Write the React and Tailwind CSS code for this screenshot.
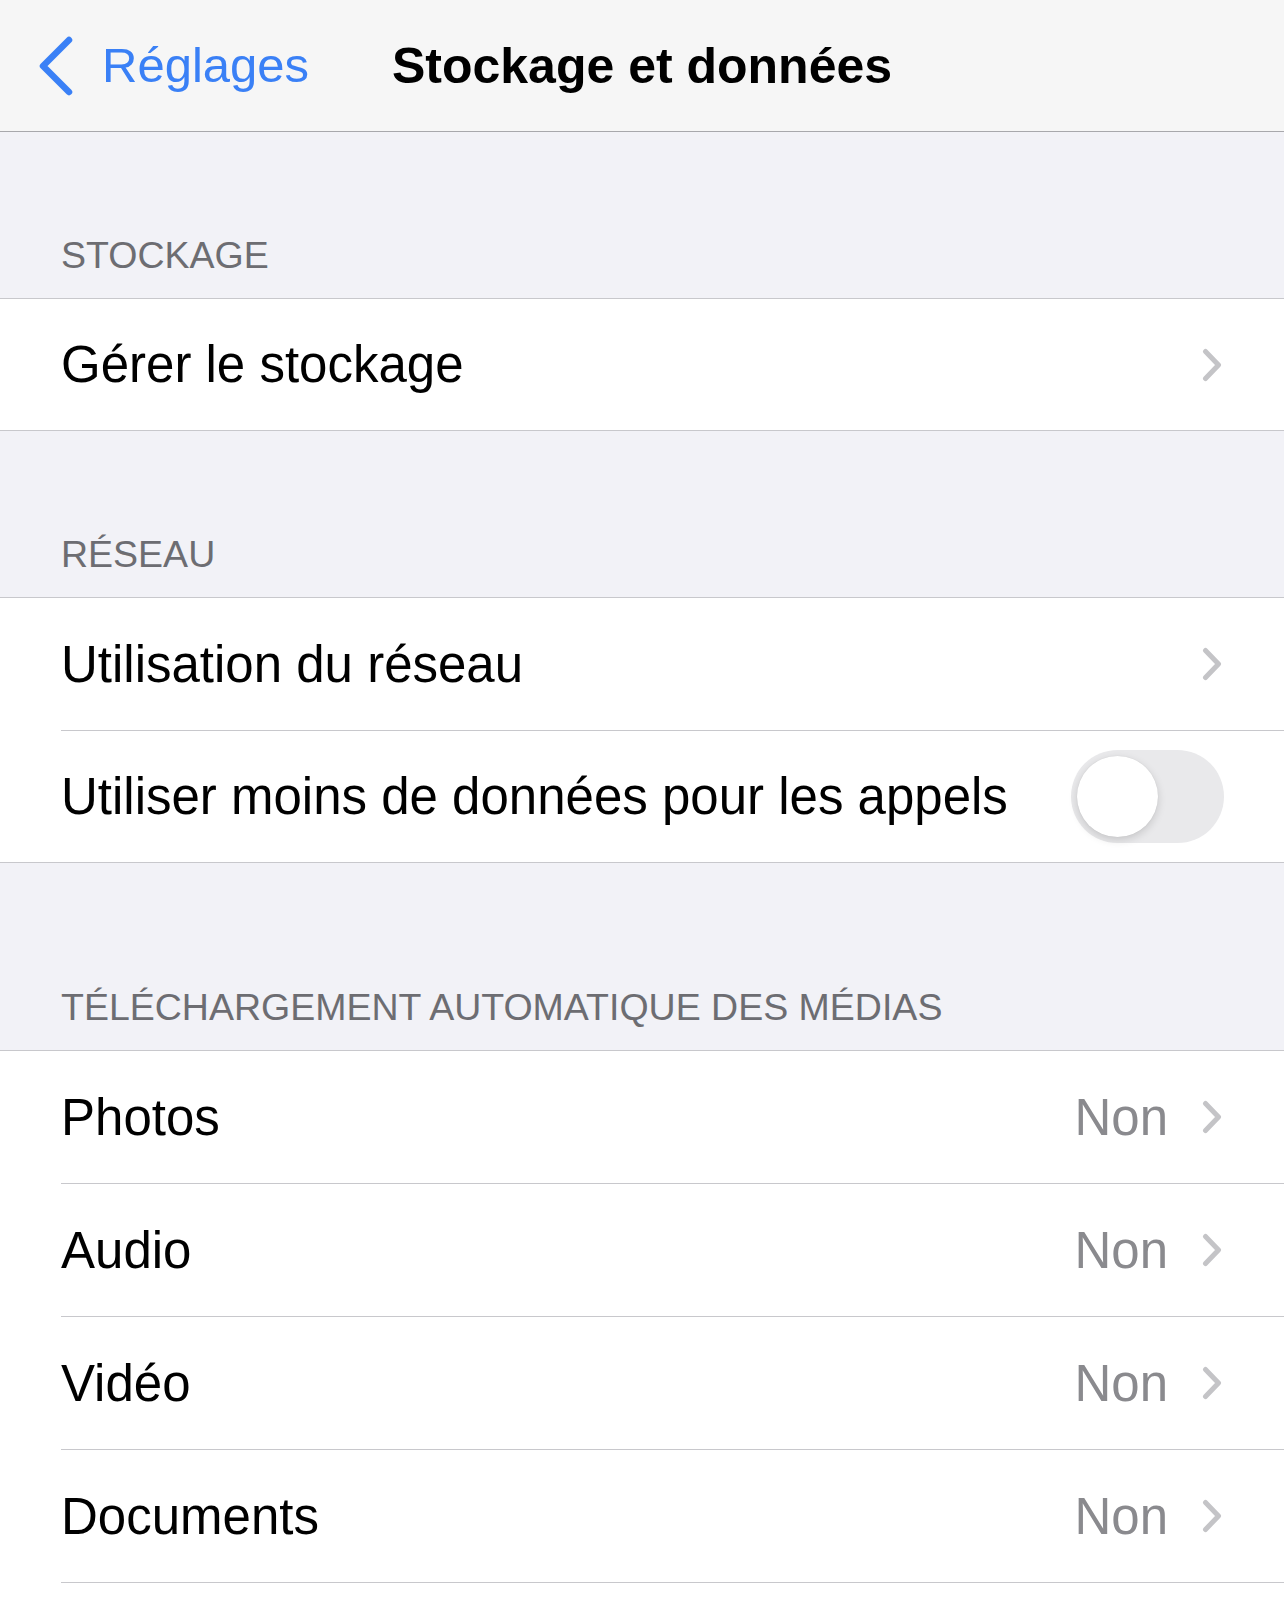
import React from "react";

const ChevronRight = () => (
  <svg width="20" height="34" viewBox="0 0 20 34" fill="none" className="shrink-0">
    <path d="M3.5 3.5 L16.5 17 L3.5 30.5" stroke="#c4c4c7" strokeWidth="5" strokeLinecap="round" strokeLinejoin="round" />
  </svg>
);

const ChevronBack = () => (
  <svg width="36" height="60" viewBox="0 0 36 60" fill="none" className="shrink-0">
    <path d="M32 4 L6 30 L32 56" stroke="#3a80f6" strokeWidth="6.5" strokeLinecap="round" strokeLinejoin="round" />
  </svg>
);

const Toggle = () => (
  <div className="w-[153px] h-[93px] rounded-full bg-[#e9e9eb] p-[6px] flex items-center shrink-0">
    <div className="w-[81px] h-[81px] rounded-full bg-white shadow-[0_3px_8px_rgba(0,0,0,0.15),0_0_1px_rgba(0,0,0,0.12)]"></div>
  </div>
);

const SectionHeader = ({ label, height }) => (
  <div className={`flex items-end pl-[61px] pb-[24px] ${height}`}>
    <span className="text-[37.5px] leading-none text-[#6d6d72]">{label}</span>
  </div>
);

const Row = ({ label, value, chevron, toggle, last }) => (
  <div className="pl-[61px]">
    <div
      className={`flex items-center justify-between ${
        last ? "h-[131px]" : "h-[133px] border-b border-[#c8c8cc]"
      } ${toggle ? "pr-[60px]" : "pr-[62px]"}`}
    >
      <span className="text-[51px] leading-none text-black">{label}</span>
      <div className="flex items-center gap-[34px]">
        {value && <span className="text-[51px] leading-none text-[#8a8a8e]">{value}</span>}
        {chevron && <ChevronRight />}
        {toggle && <Toggle />}
      </div>
    </div>
  </div>
);

const Group = ({ children }) => (
  <div className="bg-white border-y border-[#c8c8cc]">{children}</div>
);

export default function App() {
  return (
    <div className="w-[1284px] min-h-screen bg-[#f2f2f7] font-['Liberation_Sans',Arial,sans-serif]">
      <div className="h-[132px] bg-[#f6f6f6] border-b border-[#a8a8ac] grid grid-cols-[1fr_auto_1fr] items-center">
        <div className="flex items-center gap-[29px] pl-[37px]">
          <ChevronBack />
          <span className="text-[49px] leading-none text-[#3a80f6]">Réglages</span>
        </div>
        <div className="text-[50px] leading-none font-bold text-black">Stockage et données</div>
        <div></div>
      </div>

      <SectionHeader label="STOCKAGE" height="h-[166px]" />
      <Group>
        <Row label="Gérer le stockage" chevron last />
      </Group>

      <SectionHeader label="RÉSEAU" height="h-[166px]" />
      <Group>
        <Row label="Utilisation du réseau" chevron />
        <Row label="Utiliser moins de données pour les appels" toggle last />
      </Group>

      <SectionHeader label="TÉLÉCHARGEMENT AUTOMATIQUE DES MÉDIAS" height="h-[187px]" />
      <div className="bg-white border-t border-[#c8c8cc]">
        <Row label="Photos" value="Non" chevron />
        <Row label="Audio" value="Non" chevron />
        <Row label="Vidéo" value="Non" chevron />
        <Row label="Documents" value="Non" chevron />
        <div className="h-[40px]"></div>
      </div>
    </div>
  );
}
